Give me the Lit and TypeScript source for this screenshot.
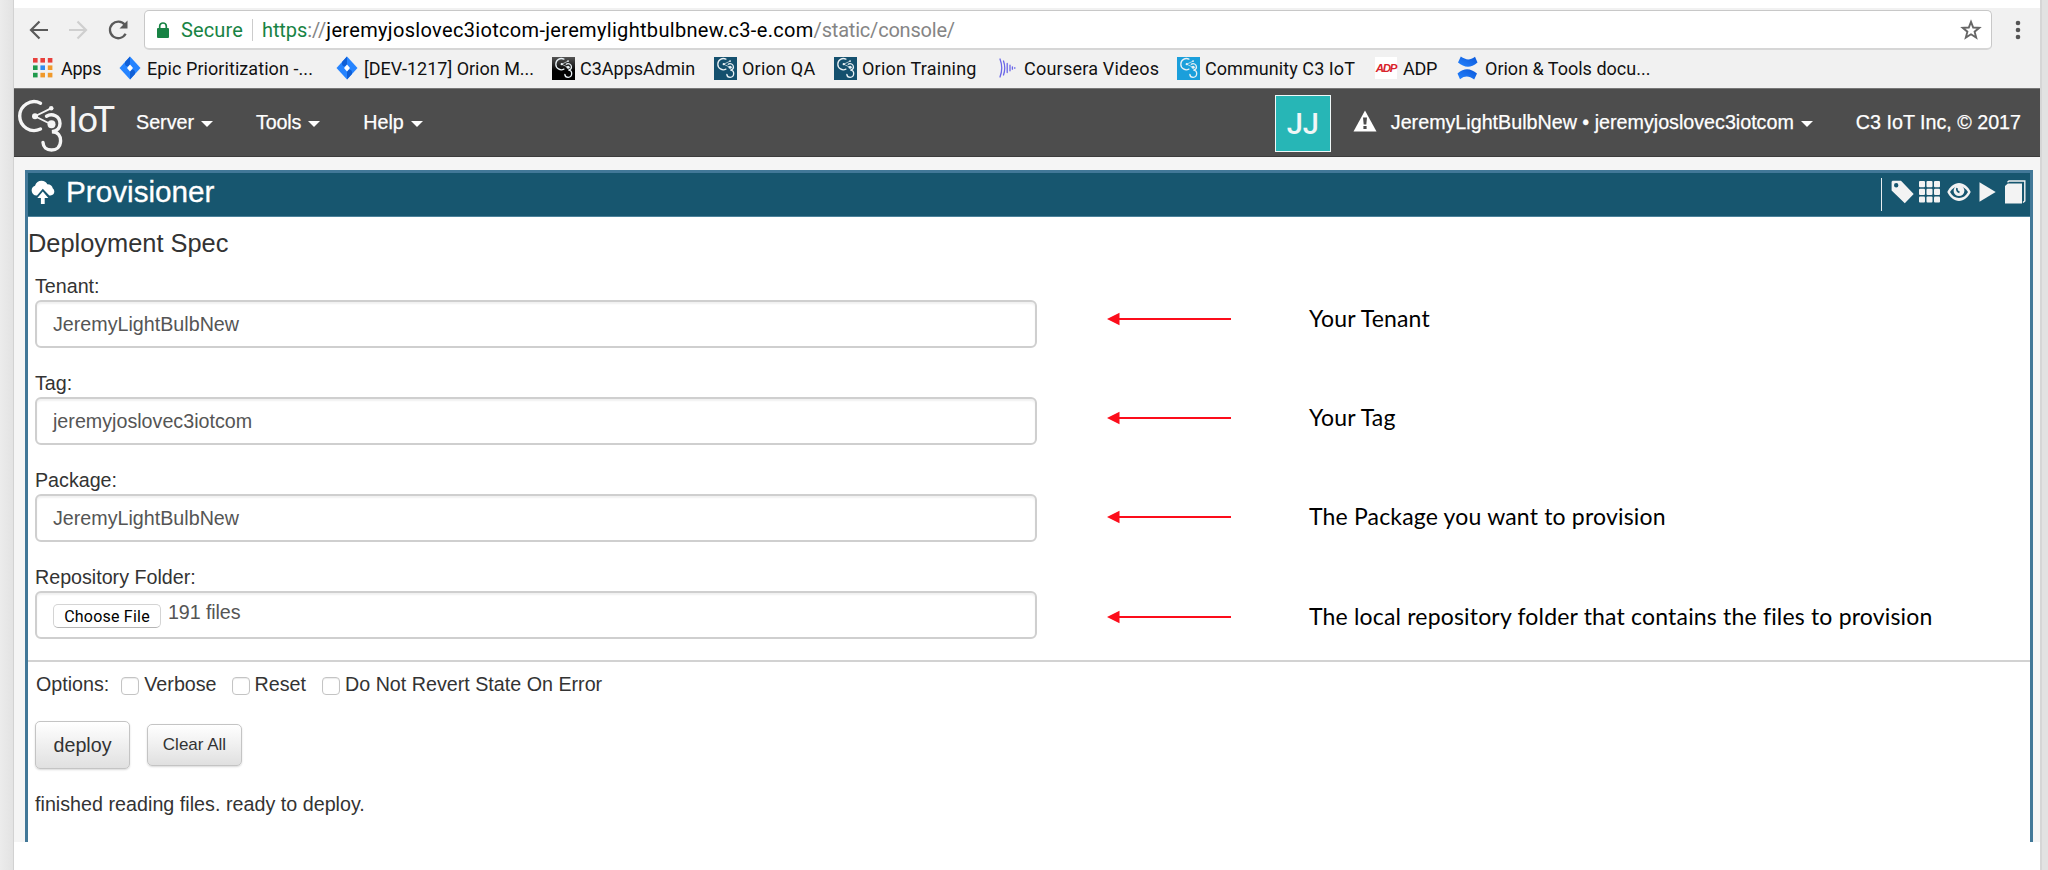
import { LitElement, html, svg, css } from 'lit';
import { customElement } from 'lit/decorators.js';

const mark = svg`
  <g fill="none" stroke="currentColor" stroke-width="3.4" stroke-linecap="round">
    <path d="M40.5 103.2A14.4 14.4 0 1 0 40.5 129"/>
    <path d="M46.5 116.2C52 112.800 60 116 60 123.500C60 128.500 57 131 52 131.700C58 132 60.800 136 60.600 141C60.300 147 56.500 150 51.500 150C46.500 150 43.200 147 43 142.500"/>
    <path d="M35 116.200L51 108.400M35 116.200L51 124.200" stroke-width="1.800"/>
  </g>
  <g fill="currentColor"><circle cx="35" cy="116.200" r="3"/><circle cx="51.200" cy="108.200" r="2.300"/><circle cx="51.500" cy="124.200" r="4"/></g>`;

const jira = html`<svg width="22" height="24" viewBox="0 0 22 24">
  <path d="M11 .5L21.500 12 11 23.500.5 12z" fill="#2684ff"/>
  <path d="M11 .5L6 6c-.5 4 1.500 5 5 3.500z" fill="#0f5fd6"/><path d="M11 23.500L16 18c.5-4-1.500-5-5-3.500z" fill="#0f5fd6"/>
  <path d="M11 8.500l3 3.500-3 3.500L8 12z" fill="#fff"/></svg>`;

const favicon = (cls: string) => html`<span class="fav ${cls}"><svg width="19" height="22" viewBox="15 98 49 56">${mark}</svg></span>`;

const apps = html`<svg width="20" height="20" viewBox="0 0 20 20">
  ${['#e8403c', '#e8403c', '#e8403c', '#1f9a4c', '#2d8cf0', '#f0992b', '#1f9a4c', '#f0992b', '#f0992b'].map(
    (c, i) => svg`<rect x=${(i % 3) * 7.4} y=${Math.floor(i / 3) * 7.4} width="4.600" height="4.600" fill=${c} />`)}</svg>`;

const coursera = html`<svg width="17" height="20" viewBox="0 0 17 20"><g fill="none" stroke="#6a66e8" stroke-width="1.300" stroke-linecap="round">
  <path d="M1 1Q4.500 10 1 19M4.500 3Q7 10 4.500 17M8.200 5.500v9M11 7.200v5.600M13.400 8.800v2.400M15.800 9.700v.6"/></g></svg>`;

const adp = html`<span class="adp">ADP</span>`;

const confluence = html`<svg width="21" height="24" viewBox="0 0 21 24">
  <defs><linearGradient id="ca" x1="1" y1="0" x2="0" y2="1"><stop offset="0" stop-color="#0b57d8"/><stop offset="1" stop-color="#2684ff"/></linearGradient></defs>
  <path d="M1 6.500L3.800.5c5 3.200 8.500 4.300 14.200.3L20.500 6.500C13 13 7 11.200 1 6.500z" fill="url(#ca)"/>
  <path d="M20 17.500L17.200 23.500c-5-3.200-8.500-4.300-14.200-.3L.5 17.500C8 11 14 12.800 20 17.500z" fill="url(#ca)"/></svg>`;

const bookmarks = [
  { icon: apps, text: 'Apps', fit: 'tight' },
  { icon: jira, text: 'Epic Prioritization -...', fit: 'loose' },
  { icon: jira, text: '[DEV-1217] Orion M...', fit: '' },
  { icon: favicon('black'), text: 'C3AppsAdmin', fit: '' },
  { icon: favicon('blue'), text: 'Orion QA', fit: 'wide' },
  { icon: favicon('blue'), text: 'Orion Training', fit: 'wide' },
  { icon: coursera, text: 'Coursera Videos', fit: 'wide near' },
  { icon: favicon('sky'), text: 'Community C3 IoT', fit: 'loose' },
  { icon: adp, text: 'ADP', fit: 'tight' },
  { icon: confluence, text: 'Orion & Tools docu...', fit: '' },
];

const fields = [
  { label: 'Tenant:', value: 'JeremyLightBulbNew' },
  { label: 'Tag:', value: 'jeremyjoslovec3iotcom' },
  { label: 'Package:', value: 'JeremyLightBulbNew' },
];
const notes = ['Your Tenant', 'Your Tag', 'The Package you want to provision',
  'The local repository folder that contains the files to provision'];

@customElement('browser-bar')
class BrowserBar extends LitElement {
  static styles = css`
    :host { display: block; height: 80px; background: #f1f1f1; font-family: Roboto, sans-serif; color: #111; }
    svg { display: block; flex: none; }
    .row { display: flex; align-items: center; height: 42px; padding: 2px 0 0 15px; box-sizing: border-box; }
    .nav { display: flex; gap: 19px; align-items: center; width: 115px; }
    .url { display: flex; align-items: center; box-sizing: border-box; width: 1848px; height: 40px; border: 1px solid #c8c8c8; border-bottom: 2px solid #d6d6d6;
      border-radius: 5px; background: #fff; font-size: 20px; padding: 0 9px 0 12px; white-space: pre; }
    .secure { color: #188344; letter-spacing: .14px; margin-left: 12px; }
    .sep { width: 1px; height: 22px; background: #ccc; margin: 0 9px; }
    .https { color: #188344; letter-spacing: -.1px; }
    .dim { color: #858585; }
    .path { color: #858585; letter-spacing: -.2px; }
    .host { color: #000; letter-spacing: .32px; }
    .star { margin-left: auto; }
    .dots { margin-left: 22px; }
    .marks { display: grid; grid-template-columns: 86px 217px 216px 162px 120px 165px 178px 198px 82px 230px;
      padding-left: 19px; height: 38px; padding-bottom: 4px; box-sizing: border-box; margin-top: 1px; }
    .mark { display: flex; align-items: center; font-size: 18px; white-space: nowrap; }
    .icon { width: 28px; flex: none; }
    .near .icon { width: 25px; }
    .tight { letter-spacing: -.25px; }
    .loose { letter-spacing: .07px; }
    .wide { letter-spacing: .22px; }
    .fav { display: flex; width: 23px; height: 23px; align-items: center; justify-content: center; color: #e8f0f4; }
    .black { background: linear-gradient(#555, #000 60%); }
    .blue { background: #14506e; }
    .sky { background: #1b9fdb; }
    .adp { display: flex; align-items: center; justify-content: center; width: 22px; height: 22px; background: #fff; color: #d8232a;
      font: italic 900 11.500px "Liberation Sans", sans-serif; letter-spacing: -1.300px; }
  `;
  render() {
    return html`
      <div class="row">
        <div class="nav">
          <svg width="20" height="20" viewBox="0 0 20 20" fill="none" stroke="#5a5a5a" stroke-width="2.200"><path d="M19 10H2.500M10.500 1.500L2 10l8.500 8.500"/></svg>
          <svg width="20" height="20" viewBox="0 0 20 20" fill="none" stroke="#cfcfcf" stroke-width="2.200"><path d="M1 10h16.500M9.500 1.500L18 10l-8.500 8.500"/></svg>
          <svg width="22" height="22" viewBox="0 0 22 22"><path d="M18.600 14.800a8.300 8.300 0 1 1-.8-9" fill="none" stroke="#5a5a5a" stroke-width="2.300"/><path d="M20.500 1.500v8h-8z" fill="#5a5a5a"/></svg>
        </div>
        <div class="url">
          <svg width="12" height="16" viewBox="0 0 12 16"><rect y="6" width="12" height="10" rx="1" fill="#188344"/><path d="M2.700 7V4.300a3.300 3.300 0 0 1 6.600 0V7" fill="none" stroke="#188344" stroke-width="1.700"/></svg>
          <span class="secure">Secure</span><span class="sep"></span><span class="https">https</span><span class="dim">://</span><span class="host">jeremyjoslovec3iotcom-jeremylightbulbnew.c3-e.com</span><span class="path">/static/console/</span>
          <svg class="star" width="22" height="22" viewBox="0 0 22 22" fill="none" stroke="#666" stroke-width="1.900"><path d="M11 2.800l2.200 5.700 6.100.3-4.700 3.900 1.600 5.900L11 15.300l-5.200 3.300 1.600-5.900L2.700 8.800l6.100-.3z"/></svg>
        </div>
        <svg class="dots" width="8" height="20" viewBox="0 0 8 20" fill="#555"><circle cx="4" cy="3" r="2.300"/><circle cx="4" cy="10" r="2.300"/><circle cx="4" cy="17" r="2.300"/></svg>
      </div>
      <div class="marks">${bookmarks.map((b) => html`<div class="mark ${b.fit}"><span class="icon">${b.icon}</span><span>${b.text}</span></div>`)}</div>`;
  }
}

@customElement('console-nav')
class ConsoleNav extends LitElement {
  static styles = css`
    :host { display: flex; align-items: center; height: 69px; box-sizing: border-box; background: #4d4d4d; color: #fff;
      border-top: 1px solid #777; border-bottom: 1px solid #3c3c3c; font: 19.700px "Liberation Sans", Arial, sans-serif; white-space: nowrap;
      -webkit-text-stroke: .25px #fff; }
    svg { display: block; flex: none; }
    .logo { margin: 6px 0 0 2px; color: #f5f5f5; overflow: visible; -webkit-text-stroke: 0; }
    .logo text { font-family: Lato, sans-serif; }
    .menu { display: flex; align-items: center; gap: 7px; }
    .caret { width: 0; border: 6px solid transparent; border-top-color: #fff; border-bottom: 0; margin-top: 3px; }
    .server { margin-left: 20px; }
    .tools { margin-left: 43px; letter-spacing: -.15px; }
    .help { margin-left: 43px; }
    .avatar { display: flex; align-items: center; justify-content: center; box-sizing: border-box; width: 56px; height: 57px; margin-left: auto;
      margin-top: 2px; border: 1.500px solid #f0f8f8; background: #27b6b6; color: #f1f6f6; font: 500 29px Roboto, sans-serif; -webkit-text-stroke: 0; }
    .warn { margin: -3px 14px 0 22px; }
    .copy { margin: 0 19px 0 43px; }
  `;
  render() {
    return html`
      <svg class="logo" width="100" height="56" viewBox="16 98 100 56">${mark}
        <text x="68" y="132" font-size="36" textLength="47" lengthAdjust="spacingAndGlyphs" fill="currentColor">IoT</text></svg>
      <div class="menu server">Server<span class="caret"></span></div>
      <div class="menu tools">Tools<span class="caret"></span></div>
      <div class="menu help">Help<span class="caret"></span></div>
      <div class="avatar">JJ</div>
      <svg class="warn" width="24" height="22" viewBox="0 0 24 22"><path d="M12 0.500L23.500 21.500H.5z" fill="#fff"/><path d="M10 7.500h4l-.7 7h-2.600zM10.400 16h3.200v3h-3.200z" fill="#4d4d4d"/></svg>
      <div class="menu">JeremyLightBulbNew • jeremyjoslovec3iotcom<span class="caret"></span></div>
      <div class="copy">C3 IoT Inc, © 2017</div>`;
  }
}

@customElement('provisioner-panel')
class ProvisionerPanel extends LitElement {
  static styles = css`
    :host { display: block; box-sizing: border-box; height: 672px; margin: 13px 7px 0 11px; border: 3px solid #427898; border-bottom: 0;
      background: #fff; color: #333; font: 19.700px/24px "Liberation Sans", Arial, sans-serif; white-space: nowrap; }
    svg { display: block; flex: none; }
    .title { display: flex; align-items: center; height: 44px; box-sizing: border-box; padding: 0 4px 5px 3px; background: #17566f;
      border-bottom: 1px solid #4c8199; color: #fff; font-size: 29.700px; -webkit-text-stroke: .3px #fff; }
    .name { margin-left: 11px; }
    .tools { display: flex; align-items: center; margin-left: auto; color: #f3f3f3; height: 38px; padding-bottom: 1px; }
    .bar { width: 1.500px; height: 33px; margin: 6px 9px 0 0; background: #e8eef1; }
    .g1 { margin-right: 5px; } .g2 { margin-right: 7px; } .g3 { margin-right: 8px; } .g4 { margin-right: 9px; }
    h2 { margin: 11px 0 16px 0; font: 25.400px/30px "Liberation Sans", Arial, sans-serif; }
    .spec { display: flex; height: 388px; border-bottom: 2px solid #d2d2d2; box-sizing: border-box; }
    .form { width: 1009px; padding-left: 7px; box-sizing: border-box; }
    .field { height: 97px; }
    .label { height: 26px; line-height: 24px; letter-spacing: -.01px; }
    .input { display: flex; align-items: center; box-sizing: border-box; height: 48px; border: 2px solid #cfcfcf;
      border-radius: 6px; padding: 0 16px; color: #555; box-shadow: inset 0 2px 2px rgba(0,0,0,.06); background: #fff; }
    .choose { display: flex; align-items: center; justify-content: center; width: 108px; height: 24px; box-sizing: border-box; border: 1px solid #d4d4d4;
      border-bottom-color: #b5b5b5; border-radius: 5px; color: #000; font: 16px Roboto, sans-serif; letter-spacing: .22px; margin-top: 2px; }
    .count { margin: -6px 0 0 7px; letter-spacing: -.1px; }
    .notes { margin: -5px 0 0 70px; color: #000; font: 23px/28px Lato, sans-serif; letter-spacing: .18px; }
    .note { display: flex; align-items: center; height: 99.400px; gap: 77px; }
    .note span { margin-top: -2px; }
    .options { display: flex; align-items: center; height: 24px; padding: 10px 0 0 8px; }
    .check { width: 18px; height: 18px; box-sizing: border-box; border: 1px solid #c4c4c4; border-radius: 4px; background: #fff; margin: 3px 5px 0 0;
      box-shadow: inset 0 1px 1px rgba(0,0,0,.08); }
    .check.a { margin-left: 12px; } .check.b { margin-left: 15px; } .check.c { margin-left: 16px; }
    .buttons { display: flex; align-items: center; gap: 17px; padding: 25px 0 0 7px; }
    .btn { display: flex; align-items: center; justify-content: center; box-sizing: border-box; width: 95px; height: 48px; border: 1.500px solid #c4c4c4;
      border-radius: 5px; background: linear-gradient(#fff, #e0e0e0); box-shadow: 0 1px 2px rgba(0,0,0,.15); padding-bottom: 1px; }
    .small { width: 95px; height: 42px; font-size: 17px; }
    .status { padding: 23px 0 0 7px; letter-spacing: .02px; }
  `;
  render() {
    return html`
      <div class="title">
        <svg width="24" height="24" viewBox="0 0 24 24"><path d="M5.500 15.500a5 5 0 0 1-1.500-9.700C5 2.500 7.500.8 10.500.8c2.800 0 4.800 1.200 5.800 3.400 3.200 0 5.200 1.700 5.400 4 2.800 2.200 1.900 7.300-2.200 7.300h-1.200L11.800 8.800 6 15.500z" fill="#fff"/><path d="M11.800 11.500l5.500 6.500h-3.600V24h-3.800v-6H6.300z" fill="#fff"/></svg>
        <span class="name">Provisioner</span>
        <div class="tools">
          <span class="bar"></span>
          <svg class="g1" width="23" height="24" viewBox="0 0 23 24"><path fill-rule="evenodd" d="M1.500.8H10L22.700 14 13.800 23.200.6 10.500V1.800zM5.200 3a2.200 2.200 0 1 0 0 4.400 2.200 2.200 0 0 0 0-4.400z" fill="currentColor"/></svg>
          <svg class="g2" width="21" height="22" viewBox="0 0 21 22">${[0, 1, 2, 3, 4, 5, 6, 7, 8].map((i) => svg`<rect x=${(i % 3) * 7.500} y=${Math.floor(i / 3) * 7.700} width="6" height="6.200" rx="1" fill="currentColor"/>`)}</svg>
          <svg class="g3" width="24" height="20" viewBox="0 0 24 20"><path d="M.3 10C3 4.500 7.200 1 12 1S21 4.500 23.700 10C21 15.500 16.800 19 12 19S3 15.500.3 10z" fill="currentColor"/><path d="M3 10C5 6.500 8 4.500 12 4.500s7 2 9 5.500c-2 3.800-5 6-9 6s-7-2.200-9-6z" fill="#17566f"/><circle cx="12" cy="8.700" r="5.400" fill="currentColor"/><path d="M10 6c-.6 2 .4 3.800 2.500 4.400" fill="none" stroke="#17566f" stroke-width="1.700"/></svg>
          <svg class="g4" width="17" height="20" viewBox="0 0 17 20"><path d="M.5.3L16.700 10 .5 19.700z" fill="currentColor"/></svg>
          <svg width="21" height="24" viewBox="0 0 21 24"><path d="M0 6l2.800-2.500H17V23.500H0z" fill="currentColor"/><path d="M2.500 2.200L4 1H19.800V21L18 22.500" fill="none" stroke="currentColor" stroke-width="1.400"/></svg>
        </div>
      </div>
      <h2>Deployment Spec</h2>
      <div class="spec">
        <div class="form">
          ${fields.map((f) => html`<div class="field"><div class="label">${f.label}</div><div class="input">${f.value}</div></div>`)}
          <div class="field"><div class="label">Repository Folder:</div><div class="input"><span class="choose">Choose File</span><span class="count">191 files</span></div></div>
        </div>
        <div class="notes">
          ${notes.map((n) => html`<div class="note"><svg width="125" height="14" viewBox="0 0 125 14" fill="#fc0d1b"><path d="M0 7L12.500.7v12.600z"/><rect x="11" y="6" width="113" height="2"/></svg><span>${n}</span></div>`)}
        </div>
      </div>
      <div class="options">Options:<i class="check a"></i>Verbose<i class="check b"></i>Reset<i class="check c"></i>Do Not Revert State On Error</div>
      <div class="buttons"><div class="btn">deploy</div><div class="btn small">Clear All</div></div>
      <div class="status">finished reading files. ready to deploy.</div>`;
  }
}

@customElement('app-root')
class AppRoot extends LitElement {
  static styles = css`
    :host { display: flex; box-sizing: border-box; width: 2048px; height: 870px; overflow: hidden; background: linear-gradient(90deg, #ececec, #e2e2e2 14px); padding-right: 6px; }
    .window { flex: 1; margin-left: 13px; border-left: 1px solid #d2d2d2; border-right: 2px solid #d6d6d6; background: #fff; padding-top: 8px; }
    .page { height: 685px; background: #f5f5f5; display: flow-root; }
  `;
  render() {
    return html`<div class="window"><browser-bar></browser-bar><console-nav></console-nav>
      <div class="page"><provisioner-panel></provisioner-panel></div></div>`;
  }
}
